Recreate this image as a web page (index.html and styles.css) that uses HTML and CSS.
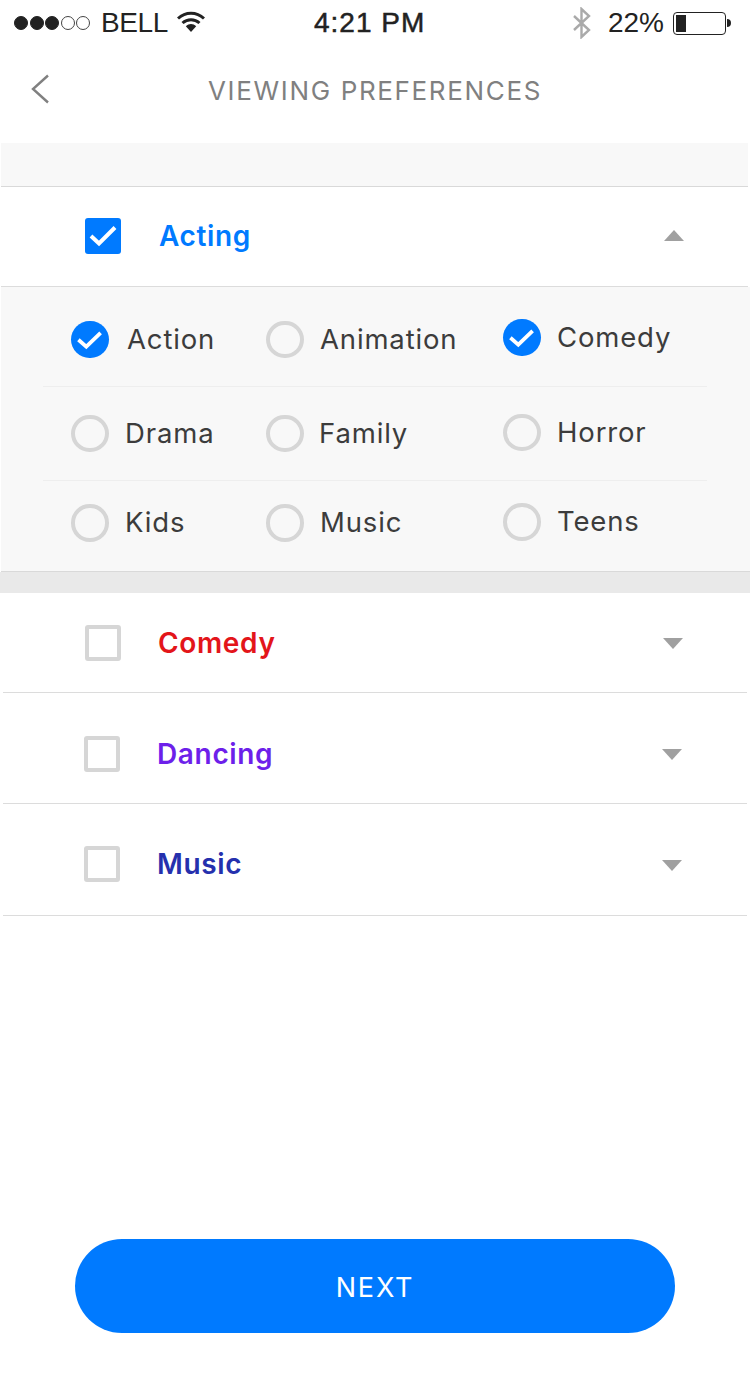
FILE: index.html
```html
<!DOCTYPE html>
<html lang="en">
<head>
<meta charset="utf-8">
<title>Viewing Preferences</title>
<link rel="stylesheet" href="styles.css">
</head>
<body>
<div class="screen">
  <header class="status">
    <div class="status-left">
      <span class="dots"><i class="dot on"></i><i class="dot on"></i><i class="dot on"></i><i class="dot"></i><i class="dot"></i></span>
      <span class="carrier">BELL</span>
      <svg class="wifi" width="28" height="22" viewBox="0 0 28 22"><path d="M1 7.5C8.5.5 19.5.5 27 7.5" fill="none" stroke="#222" stroke-width="3"/><path d="M5.5 12C10.5 7.5 17.5 7.5 22.5 12" fill="none" stroke="#222" stroke-width="3"/><path d="M8.8 15.2C12 12.4 16 12.4 19.2 15.2L14 21Z" fill="#222"/></svg>
    </div>
    <div class="time">4:21 PM</div>
    <div class="status-right">
      <svg class="bt" width="20" height="32" viewBox="0 0 20 32"><path d="M2 9L17 23L9.5 30V2L17 9L2 23" fill="none" stroke="#aaa" stroke-width="2.4"/></svg>
      <span class="pct">22%</span>
      <span class="battery"><span class="battery-fill"></span></span>
      <span class="battery-tip"></span>
    </div>
  </header>

  <nav class="nav">
    <svg class="back" width="20" height="30" viewBox="0 0 20 30"><path d="M18 1.5L3 15L18 28.5" fill="none" stroke="#808080" stroke-width="2.4"/></svg>
    <h1 class="title">VIEWING PREFERENCES</h1>
  </nav>

  <div class="band"></div>

  <section class="row row-open">
    <span class="box checked"><svg width="36" height="36" viewBox="0 0 36 36"><path d="M6 18L14 25.5L30 9.5" fill="none" stroke="#fff" stroke-width="4"/></svg></span>
    <span class="label acting">Acting</span>
    <span class="caret up"></span>
  </section>

  <section class="panel">
    <div class="opts first">
      <div class="opt"><span class="radio checked"><svg viewBox="0 0 38 38"><path d="M7.5 19L15.5 26L30 12" fill="none" stroke="#fff" stroke-width="3.8"/></svg></span><span class="opt-text shift">Action</span></div>
      <div class="opt"><span class="radio"></span><span class="opt-text flush">Animation</span></div>
      <div class="opt up2"><span class="radio checked"><svg viewBox="0 0 38 38"><path d="M7.5 19L15.5 26L30 12" fill="none" stroke="#fff" stroke-width="3.8"/></svg></span><span class="opt-text flush">Comedy</span></div>
    </div>
    <div class="opts">
      <div class="opt"><span class="radio"></span><span class="opt-text flush">Drama</span></div>
      <div class="opt"><span class="radio"></span><span class="opt-text">Family</span></div>
      <div class="opt up1"><span class="radio"></span><span class="opt-text flush">Horror</span></div>
    </div>
    <div class="opts last">
      <div class="opt"><span class="radio"></span><span class="opt-text flush">Kids</span></div>
      <div class="opt"><span class="radio"></span><span class="opt-text flush">Music</span></div>
      <div class="opt up1"><span class="radio"></span><span class="opt-text flush">Teens</span></div>
    </div>
  </section>

  <div class="band-dark"></div>

  <section class="row row-comedy">
    <span class="box"></span>
    <span class="label comedy">Comedy</span>
    <span class="caret"></span>
  </section>
  <section class="row row-dancing">
    <span class="box"></span>
    <span class="label dancing">Dancing</span>
    <span class="caret"></span>
  </section>
  <section class="row row-music">
    <span class="box"></span>
    <span class="label music">Music</span>
    <span class="caret"></span>
  </section>

  <div class="footer">
    <button class="next">NEXT</button>
  </div>
</div>
</body>
</html>
```

FILE: styles.css
```css
* { box-sizing: border-box; }
html, body { margin: 0; padding: 0; background: #fff; }
.screen { width: 750px; height: 1400px; display: flex; flex-direction: column; font-family: Inter, "Liberation Sans", sans-serif; overflow: hidden; }

.status { height: 44px; display: grid; grid-template-columns: 300px auto 1fr; align-items: center; font-family: "Liberation Sans", Arial, sans-serif; color: #222; font-size: 28px; padding: 2px 0 0 14px; }
.status-left { display: flex; align-items: center; }
.dots { display: flex; gap: 1.5px; }
.dot { width: 14px; height: 14px; border-radius: 50%; border: 1px solid #444; }
.dot.on { background: #222; border-color: #222; }
.carrier { margin-left: 11px; letter-spacing: -.4px; }
.wifi { margin-left: 9px; margin-top: -3px; }
.time { letter-spacing: 1px; -webkit-text-stroke: .5px #222; }
.status-right { display: flex; align-items: center; justify-content: flex-end; padding-right: 19px; }
.bt { margin-right: 16px; }
.pct { margin-right: 9px; }
.battery { width: 53px; height: 23px; border: 1px solid #222; border-radius: 4px; padding: 2px; display: block; }
.battery-fill { display: block; width: 10px; height: 100%; background: #222; }
.battery-tip { width: 4px; height: 8px; background: #222; border-radius: 0 4px 4px 0; margin-left: 1px; }

.nav { height: 99px; position: relative; display: flex; align-items: center; justify-content: center; padding-bottom: 6px; }
.back { position: absolute; left: 30px; top: 30px; }
.title { margin: 0; font-size: 26px; font-weight: 400; letter-spacing: 1.65px; color: #808080; }

.band { height: 44px; margin: 0 2px 0 1px; background: #f8f8f8; border-bottom: 1px solid #d9d9d9; }

.row { display: flex; align-items: center; border-bottom: 1px solid #dcdcdc; background: #fff; }
.row-open { height: 100px; margin-right: 2px; margin-left: 1px; padding: 0 64px 2px 84px; }
.row-comedy { height: 100px; margin: 0 3px; padding: 0 64px 0 82px; }
.row-dancing { height: 111px; margin: 0 3px; padding: 11px 65px 0 81px; }
.row-music { height: 112px; margin: 0 3px; padding: 9px 65px 0 81px; }

.box { width: 36px; height: 36px; border: 4px solid #d6d6d6; border-radius: 3px; flex: none; display: block; }
.box.checked { background: #007aff; border: 0; }
.box svg { display: block; }

.label { flex: 1; font-size: 28px; font-weight: 600; letter-spacing: .65px; margin-left: 37px; }
.acting { color: #007aff; margin-left: 38px; }
.comedy { color: #e3151a; }
.dancing { color: #6d1fea; }
.music { color: #2530ad; }

.caret { width: 0; height: 0; margin-top: 2px; border-left: 10.5px solid transparent; border-right: 10.5px solid transparent; border-top: 11px solid #a0a0a0; }
.caret.up { margin-top: -1px; border-top: 0; border-bottom: 11px solid #a0a0a0; }

.panel { height: 285px; margin-left: 1px; background: #f8f8f8; border-bottom: 1px solid #d9d9d9; padding: 0 43px 0 42px; }
.opts { height: 94px; display: grid; grid-template-columns: 195px 237px 1fr; align-items: center; padding: 0 0 0 28px; border-bottom: 1px solid #eeeeee; }
.opts.first { height: 100px; padding-top: 6px; }
.opts.last { border-bottom: 0; height: 90px; padding-bottom: 6px; }
.opt { display: flex; align-items: center; gap: 16.5px; }
.up1 { margin-top: -2px; }
.up2 { margin-top: -4px; }
.radio { width: 37.5px; height: 37.5px; border: 4px solid #d6d6d6; border-radius: 50%; flex: none; display: block; }
.radio.checked { background: #007aff; border: 0; }
.radio svg { display: block; width: 100%; height: 100%; }
.opt-text { font-size: 27.5px; letter-spacing: .85px; color: #3c3c3c; margin-left: -1px; margin-top: -2px; }
.flush { margin-left: 0; }
.shift { margin-left: 2px; }

.band-dark { height: 21px; background: #e9e9e9; }

.footer { flex: 1; display: flex; justify-content: center; align-items: flex-start; padding-top: 323px; }
.next { width: 600px; height: 94px; border: 0; border-radius: 47px; background: #007aff; color: #fff; font-family: inherit; font-size: 27px; letter-spacing: 1.8px; padding-top: 4px; }
```
